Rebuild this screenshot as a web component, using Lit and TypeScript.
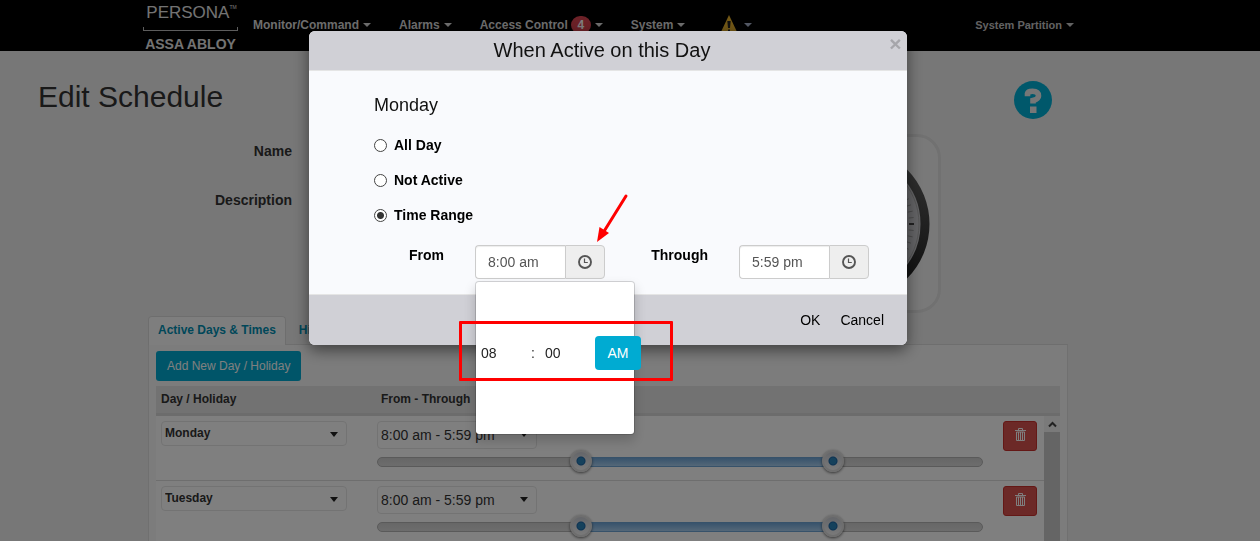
import { LitElement, html, css, svg } from "lit";
import { customElement, state } from "lit/decorators.js";

interface DayRow {
  day: string;
  label: string;
  from: number;
  through: number;
}

const caret = html`<svg class="caret" viewBox="0 0 8 4" preserveAspectRatio="none" aria-hidden="true"><path d="M0 0h8L4 4z" fill="currentColor" /></svg>`;

const clock = html`<svg width="14" height="14" viewBox="0 0 14 14" aria-hidden="true">
  <circle cx="7" cy="7" r="6" fill="none" stroke="#555" stroke-width="1.9" />
  <path d="M6.5 3.5V7.5H9.8" fill="none" stroke="#555" stroke-width="1.2" />
</svg>`;

const trash = html`<svg width="11" height="13" viewBox="0 0 11 13" aria-hidden="true">
  <path d="M3.5 2V.5h4V2M0 2.5h11" fill="none" stroke="#fff" />
  <path d="M1.5 4h8v8.5h-8zM3.5 4v8M5.5 4v8M7.5 4v8" fill="none" stroke="#fff" />
</svg>`;

@customElement("app-root")
export class AppRoot extends LitElement {
  static styles = css`
    :host {
      display: block;
      height: 100vh;
      overflow: hidden;
      background: #efefef;
      color: #333;
      font: 14px/20px "Liberation Sans", Arial, sans-serif;
    }
    * { box-sizing: border-box; }
    button, input, select { font: inherit; color: inherit; margin: 0; }
    button { cursor: pointer; }
    h1, h2, h3 { margin: 0; font-weight: 400; }
    svg { display: block; }
    .caret { width: 8px; height: 4px; flex: none; }

    .nav {
      height: 51px;
      background: #000;
      color: #dcdcdc;
      display: flex;
      align-items: flex-start;
      padding: 0 186px 0 143px;
      font-size: 12px;
      font-weight: 700;
    }
    .logo { width: 95px; margin-right: 15px; color: #e6e6e6; }
    .logo-top { display: flex; justify-content: center; font-size: 17px; font-weight: 400; line-height: 26px; padding-left: 2px; }
    .logo-tm { font-size: 5px; line-height: 14px; }
    .logo-rule { display: block; height: 4px; border: 1px solid #bbb; border-top: 0; margin: 1px 0 6px; }
    .logo-bottom { display: block; font-size: 14px; line-height: 14px; text-align: center; white-space: nowrap; }
    .menu { display: flex; flex: 1; gap: 28px; padding-top: 15px; }
    .menu a { display: flex; align-items: center; gap: 4px; height: 20px; color: inherit; text-decoration: none; white-space: nowrap; }
    .menu .warn { margin-left: 7px; gap: 6px; color: #a9b4cc; }
    .menu .partition { margin-left: auto; font-size: 11px; color: #c4c4c4; }
    .badge { background: #d9434f; color: #fff; border-radius: 10px; width: 20px; height: 18px; line-height: 18px; text-align: center; margin-left: -1px; }

    .page { padding: 26px 44px 0 0; }
    .title-bar { display: flex; justify-content: space-between; padding: 0 164px 0 38px; height: 57px; }
    h1 { font-size: 30px; line-height: 40px; }
    .help { width: 38px; height: 38px; margin-top: 4px; padding: 0; border: 0; background: none; }

    .content { max-width: 920px; margin: 0 auto; }
    .form { display: flex; gap: 30px; padding-right: 127px; height: 182px; }
    .fields { flex: 1; display: grid; grid-template-columns: 144px 1fr; grid-auto-rows: 34px; gap: 15px 30px; }
    .fields label { text-align: right; font-weight: 700; line-height: 34px; }
    .fields input { width: 100%; border: 1px solid #ccc; border-radius: 4px; padding: 6px 12px; background: #fff; }
    .picture { width: 180px; height: 179px; border: 3px solid #e2e2e2; border-radius: 24px; background: #f3f3f3; }

    .tabs { display: flex; gap: 3px; height: 28px; font-size: 12px; font-weight: 700; }
    .tabs a { color: #008fb3; text-decoration: none; padding: 0 9px; line-height: 27px; height: 29px; border: 1px solid transparent; }
    .tabs a.on { background: #fdfdfd; border-color: #ddd; border-bottom: 0; border-radius: 4px 4px 0 0; position: relative; }
    .panel { border: 1px solid #e0e0e0; border-top-color: #ddd; background: #f8f8f8; padding: 6px 7px 0; }
    .add { height: 30px; padding: 0 11px; border: 0; border-radius: 3px; background: #00abd2; color: #fff; font-size: 12px; white-space: nowrap; }

    table { width: 100%; margin-top: 5px; border-collapse: separate; border-spacing: 0; table-layout: fixed; background: #fff; }
    .c1 { width: 216px; }
    .c3 { width: 46px; }
    .c4 { width: 16px; }
    th { height: 30px; padding: 0 5px 2px; text-align: left; background: #e5e5e5; border-bottom: 3px solid #d8d8d8; font-size: 12px; }
    th.indent { padding-left: 9px; }
    td { height: 65px; padding: 5px 5px 0; vertical-align: top; border-bottom: 1px solid #ddd; }
    td.range-cell { padding-right: 15px; }
    td.scroll { padding: 0; background: #cbcbcb; border: 0; }
    .scroll-up { display: grid; place-items: center; width: 16px; height: 16px; padding: 0; border: 0; background: #f4f4f4; }
    .pick { position: relative; display: block; width: 186px; height: 25px; color: #222; }
    .pick.time { width: 160px; height: 28px; }
    .pick select { appearance: none; width: 100%; height: 100%; border: 1px solid #e6e6e6; border-radius: 4px; background: #fff; padding: 0 3px 2px; font-size: 12px; font-weight: 700; color: #333; }
    .pick.time select { font-size: 14px; font-weight: 400; padding-bottom: 0; }
    .pick .caret { position: absolute; right: 9px; top: 11px; height: 5px; }
    .del { width: 34px; height: 30px; border: 1px solid #c9302c; border-radius: 3px; background: #d9534f; display: grid; place-items: center; padding: 0 0 3px; }

    .slider { position: relative; height: 10px; margin-top: 8px; border: 1px solid #b4b4b4; border-radius: 5px; background: linear-gradient(#cecece, #dadada); }
    .fill { position: absolute; top: -1px; bottom: -1px; border: 1px solid #6fa5d5; background: linear-gradient(#70a6d8, #a9cff0); }
    .slider input {
      position: absolute; left: -10px; top: -9px; width: calc(100% + 24px); height: 24px;
      appearance: none; background: none; pointer-events: none;
    }
    .slider input::-webkit-slider-thumb {
      appearance: none; pointer-events: auto; width: 22px; height: 22px; border-radius: 50%;
      background: radial-gradient(circle, #2a82b8 0 3px, #1c65a5 4px, transparent 5px), linear-gradient(#c9ccd4, #f4f4f4);
      border: 2px solid #dcdcdc; box-shadow: 0 1px 3px rgba(0, 0, 0, .6);
    }

    .backdrop { position: fixed; inset: 0; background: rgba(0, 0, 0, .5); padding: 31px 44px 0 0; }
    .dialog { max-width: 598px; margin: 0 auto; border-radius: 6px; background: #f9fafd; color: #000; box-shadow: 0 5px 15px rgba(0, 0, 0, .5); }
    .head { height: 40px; display: flex; align-items: flex-start; padding: 0 3px 0 8px; border-bottom: 1px solid #e5e5e5; border-radius: 6px 6px 0 0; background: #d0d0d6; }
    .head h2 { flex: 1; text-align: center; font-size: 20px; line-height: 38px; color: #111; }
    .close { width: 17px; height: 26px; padding: 0; border: 0; background: none; color: #a6a6ab; font-size: 21px; font-weight: 700; line-height: 26px; }
    .body { padding: 24px 38px 15px 65px; }
    h3 { font-size: 18px; line-height: 20px; color: #111; }
    .choices { display: grid; gap: 15px; margin: 20px 0; justify-items: start; font-weight: 700; }
    .choices label { display: flex; align-items: center; gap: 7px; }
    .choices input { appearance: none; width: 13px; height: 13px; border: 1px solid #444; border-radius: 50%; background: #fff; }
    .choices input:checked { background: radial-gradient(circle, #333 0 3px, #fff 4px); }
    .times { display: flex; justify-content: space-between; }
    .times .field { display: flex; gap: 31px; padding-left: 35px; }
    .times label { font-weight: 700; }
    .group { position: relative; display: flex; width: 130px; height: 34px; }
    .group > input { flex: 1; min-width: 0; border: 1px solid #ccc; border-right: 0; border-radius: 4px 0 0 4px; padding: 0 12px; background: #fff; color: #555; box-shadow: inset 0 1px 1px rgba(0, 0, 0, .075); }
    .addon { width: 40px; border: 1px solid #ccc; border-radius: 0 4px 4px 0; background: #eee; display: grid; place-items: center; padding: 0; }
    .foot { height: 51px; display: flex; align-items: center; justify-content: flex-end; gap: 20px; padding-right: 23px; border-top: 1px solid #e5e5e5; border-radius: 0 0 6px 6px; background: #d0d0d6; }
    .foot button { border: 0; padding: 0; background: none; }

    .picker { position: absolute; left: 0; top: 36px; width: 160px; height: 154px; display: flex; align-items: center; padding: 0 0 10px 5px; border: 1px solid rgba(0, 0, 0, .15); border-radius: 4px; background: #fff; background-clip: padding-box; box-shadow: 0 6px 12px rgba(0, 0, 0, .175); }
    .picker input { width: 50px; height: 34px; border: 0; padding: 0; background: none; color: #222; }
    .picker .colon { width: 14px; flex: none; color: #333; }
    .ampm { flex: none; width: 46px; height: 34px; border: 0; border-radius: 4px; background: #00abd2; color: #fff; padding: 0; }
    .mark { position: absolute; left: -16px; top: 76px; width: 214px; height: 60px; border: 3px solid #f00; border-radius: 1px; pointer-events: none; }
    .arrow { position: absolute; left: 120px; top: -52px; pointer-events: none; }
  `;

  @state() private mode = "Time Range";

  private rows: DayRow[] = [
    { day: "Monday", label: "8:00 am - 5:59 pm", from: 480, through: 1079 },
    { day: "Tuesday", label: "8:00 am - 5:59 pm", from: 480, through: 1079 },
  ];

  private renderRow(row: DayRow, index: number) {
    const left = (row.from / 1440) * 100;
    const width = ((row.through - row.from) / 1440) * 100;
    return html`<tr>
      <td>
        <span class="pick">
          <select aria-label="Day"><option>${row.day}</option></select>${caret}
        </span>
      </td>
      <td class="range-cell">
        <span class="pick time">
          <select aria-label="Hours for ${row.day}"><option>${row.label}</option></select>${caret}
        </span>
        <div class="slider">
          <div class="fill" style="left:${left}%;width:${width}%"></div>
          <input type="range" min="0" max="1440" .value=${String(row.from)} aria-label="${row.day} from" />
          <input type="range" min="0" max="1440" .value=${String(row.through)} aria-label="${row.day} through" />
        </div>
      </td>
      <td><button class="del" aria-label="Delete ${row.day}">${trash}</button></td>
      ${index === 0
        ? html`<td class="scroll" rowspan=${this.rows.length}>
            <button class="scroll-up" aria-label="Scroll up">
              <svg width="9" height="7" viewBox="0 0 9 7"><path d="M1 5.5 4.5 2 8 5.5" fill="none" stroke="#444" stroke-width="2" /></svg>
            </button>
          </td>`
        : ""}
    </tr>`;
  }

  private renderDial() {
    const ticks = Array.from({ length: 60 }, (_, i) => svg`<path d="M0 -62V-57" transform="rotate(${i * 6})" stroke=${i % 5 ? "#888" : "#222"} stroke-width=${i % 5 ? 0.7 : 1.6} />`);
    return html`<svg width="174" height="173" viewBox="-87 -87 174 173" aria-hidden="true">
      <defs>
        <linearGradient id="rim" x1="0" y1="0" x2="0" y2="1"><stop offset="0" stop-color="#6a6a6a" /><stop offset="1" stop-color="#1a1a1a" /></linearGradient>
      </defs>
      <circle cx="1" r="73" fill="#c8c8cc" stroke="url(#rim)" stroke-width="9" />
      <circle cx="1" r="67" fill="none" stroke="#aaa" />
      <g transform="translate(1 0)">${ticks}</g>
    </svg>`;
  }

  render() {
    return html`
      <header class="nav">
        <div class="logo">
          <span class="logo-top">PERSONA<span class="logo-tm">TM</span></span>
          <span class="logo-rule"></span>
          <span class="logo-bottom">ASSA ABLOY</span>
        </div>
        <nav class="menu">
          <a href="#">Monitor/Command${caret}</a>
          <a href="#">Alarms${caret}</a>
          <a href="#">Access Control<span class="badge">4</span>${caret}</a>
          <a href="#">System${caret}</a>
          <a href="#" class="warn" aria-label="Warnings">
            <svg width="18" height="20" viewBox="0 0 18 20"><path d="M9 0 18 19H0z" fill="#e5b02c" /><path d="M7.300 6h3.400l-.7 7H8zM8 14.500h2v2H8z" fill="#222" /></svg>${caret}
          </a>
          <a href="#" class="partition">System Partition${caret}</a>
        </nav>
      </header>

      <main class="page">
        <div class="title-bar">
          <h1>Edit Schedule</h1>
          <button class="help" aria-label="Help">
            <svg width="38" height="38" viewBox="0 0 38 38">
              <circle cx="19" cy="19" r="19" fill="#00b0d6" />
              <path d="M13.500 15.200V12.500Q14 10.300 18.500 10.300Q24.500 10.300 24.500 15Q24.500 18 19 19.500V22.500" fill="none" stroke="#efefef" stroke-width="5.600" />
              <path d="M16 25.500h6.500v6.500H16z" fill="#efefef" />
            </svg>
          </button>
        </div>

        <div class="content">
          <div class="form">
            <div class="fields">
              <label for="name">Name</label><input id="name" type="text" />
              <label for="description">Description</label><input id="description" type="text" />
            </div>
            <div class="picture">${this.renderDial()}</div>
          </div>

          <nav class="tabs">
            <a href="#" class="on">Active Days &amp; Times</a>
            <a href="#">History</a>
          </nav>
          <section class="panel">
            <button class="add">Add New Day / Holiday</button>
            <table>
              <colgroup><col class="c1" /><col /><col class="c3" /><col class="c4" /></colgroup>
              <thead>
                <tr><th>Day / Holiday</th><th class="indent">From - Through</th><th></th><th></th></tr>
              </thead>
              <tbody>${this.rows.map((row, i) => this.renderRow(row, i))}</tbody>
            </table>
          </section>
        </div>
      </main>

      <div class="backdrop">
        <section class="dialog" role="dialog" aria-labelledby="dialog-title">
          <header class="head">
            <h2 id="dialog-title">When Active on this Day</h2>
            <button class="close" aria-label="Close">×</button>
          </header>
          <div class="body">
            <h3>Monday</h3>
            <div class="choices">
              ${["All Day", "Not Active", "Time Range"].map(
                (m) => html`<label><input type="radio" name="mode" .checked=${this.mode === m} @change=${() => (this.mode = m)} />${m}</label>`
              )}
            </div>
            <div class="times">
              <div class="field">
                <label for="from">From</label>
                <div class="group">
                  <input id="from" type="text" value="8:00 am" />
                  <button class="addon" aria-label="Pick start time">${clock}</button>
                  <div class="picker">
                    <input type="text" value="08" aria-label="Hour" />
                    <span class="colon">:</span>
                    <input type="text" value="00" aria-label="Minute" />
                    <button class="ampm">AM</button>
                  </div>
                  <div class="mark"></div>
                  <svg class="arrow" width="34" height="52" viewBox="0 0 34 52" aria-hidden="true">
                    <path d="M31 3 8 40" stroke="#f00" stroke-width="3" stroke-linecap="round" />
                    <path d="M2 49 4.500 34 14 40z" fill="#f00" />
                  </svg>
                </div>
              </div>
              <div class="field">
                <label for="through">Through</label>
                <div class="group">
                  <input id="through" type="text" value="5:59 pm" />
                  <button class="addon" aria-label="Pick end time">${clock}</button>
                </div>
              </div>
            </div>
          </div>
          <footer class="foot"><button>OK</button><button>Cancel</button></footer>
        </section>
      </div>
    `;
  }
}
